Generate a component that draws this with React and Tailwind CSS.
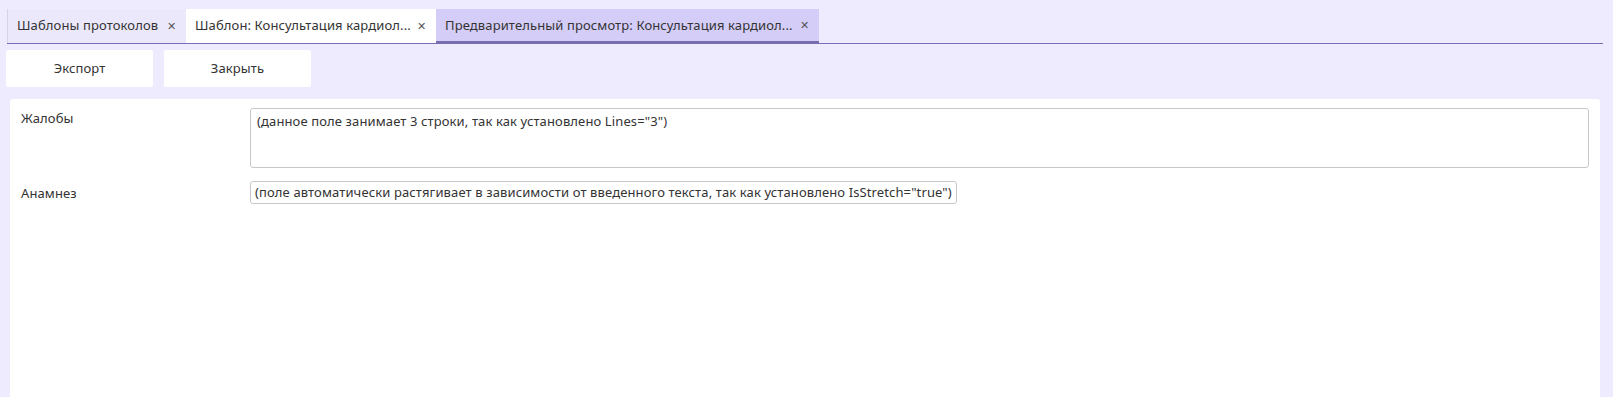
export default function App() {
  const font = { fontFamily: '"Noto Sans", "Open Sans", sans-serif' };
  return (
    <div className="w-[1613px] h-[397px] overflow-hidden bg-[#eeebfe] text-[13px] tracking-[0.12px] text-[#333333] flex flex-col" style={font}>
      <div className="pt-[9px] px-[7px] pr-[10px]">
        <div className="flex h-[35px] border-b border-[#7b6bb8]">
          <div className="flex items-center w-[179px] pl-[9px] pr-[10px] border-l border-[#d6d3e6] bg-[#ece8fb] justify-between">
            <span>Шаблоны протоколов</span>
            <span className="text-[11px] text-[#555]">✕</span>
          </div>
          <div className="flex items-center w-[250px] pl-[9px] pr-[10px] bg-white justify-between">
            <span>Шаблон: Консультация кардиол...</span>
            <span className="text-[11px] text-[#555]">✕</span>
          </div>
          <div className="flex items-center w-[383px] pl-[9px] pr-[10px] pt-[1px] bg-[#d3cdf8] border-b-[3px] border-[#7a6cb0] -mb-px justify-between">
            <span>Предварительный просмотр: Консультация кардиол...</span>
            <span className="text-[11px] text-[#555]">✕</span>
          </div>
        </div>
      </div>
      <div className="flex gap-[11px] pl-[6px] pt-[6px]">
        <button className="w-[147px] h-[37px] bg-white rounded-[2px] text-[13px] tracking-[0.12px] text-[#333]" style={font}>Экспорт</button>
        <button className="w-[147px] h-[37px] bg-white rounded-[2px] text-[13px] tracking-[0.12px] text-[#333]" style={font}>Закрыть</button>
      </div>
      <div className="flex-1 ml-[10px] mr-[13px] mt-[12px] bg-white rounded-t-[3px] pt-[9px] px-[11px] flex flex-col gap-[13px]">
        <div className="flex">
          <div className="w-[229px] pt-[1px]">Жалобы</div>
          <div className="flex-1 h-[60px] border border-[#c8c8c8] rounded-[3px] px-[6px] pt-[3px]">
            (данное поле занимает 3 строки, так как установлено Lines="3")
          </div>
        </div>
        <div className="flex">
          <div className="w-[229px] pt-[3px]">Анамнез</div>
          <div className="h-[23px] border border-[#c8c8c8] rounded-[3px] px-[4px] flex items-center whitespace-nowrap">
            (поле автоматически растягивает в зависимости от введенного текста, так как установлено IsStretch="true")
          </div>
        </div>
      </div>
    </div>
  );
}
